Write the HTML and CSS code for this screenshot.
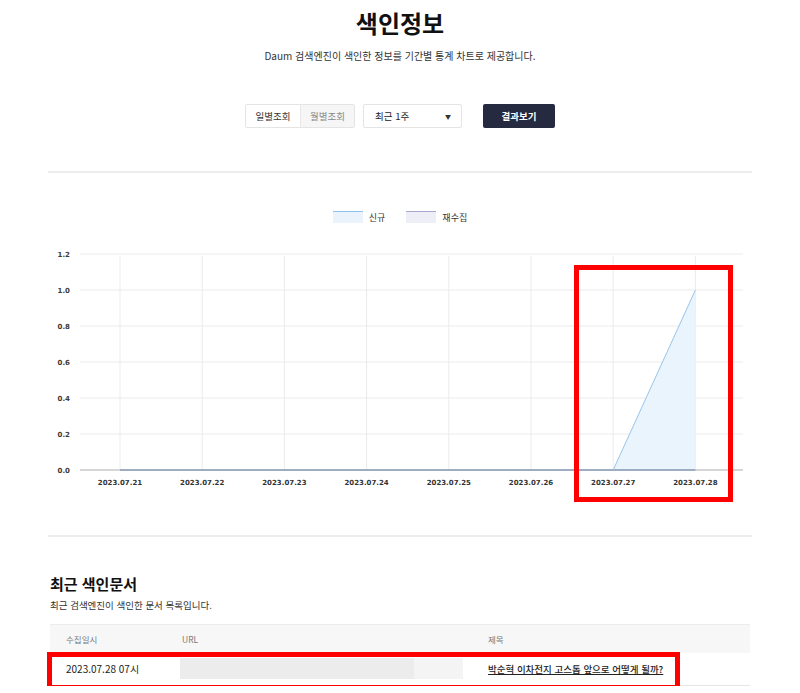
FILE: index.html
```html
<!DOCTYPE html>
<html lang="ko">
<head>
<meta charset="utf-8">
<title>색인정보</title>
<link rel="stylesheet" href="styles.css">
</head>
<body>
<div class="page">
  <header class="head">
    <h1 class="title">색인정보</h1>
    <p class="desc">Daum 검색엔진이 색인한 정보를 기간별 통계 차트로 제공합니다.</p>
  </header>

  <div class="controls">
    <div class="seg">
      <button class="seg-btn active">일별조회</button>
      <button class="seg-btn">월별조회</button>
    </div>
    <div class="select"><span>최근 1주</span><span class="caret">▼</span></div>
    <button class="go">결과보기</button>
  </div>

  <div class="rule"></div>

  <div class="legend">
    <div class="leg-item"><span class="sw sw-new"></span><span>신규</span></div>
    <div class="leg-item"><span class="sw sw-re"></span><span>재수집</span></div>
  </div>

  <svg class="chart" width="700" height="260" viewBox="0 0 700 260">
    <g class="hgrid">
      <line x1="30" y1="14" x2="693" y2="14"/>
      <line x1="30" y1="50" x2="693" y2="50"/>
      <line x1="30" y1="86" x2="693" y2="86"/>
      <line x1="30" y1="122" x2="693" y2="122"/>
      <line x1="30" y1="158" x2="693" y2="158"/>
      <line x1="30" y1="194" x2="693" y2="194"/>
    </g>
    <g class="vgrid">
      <line x1="70" y1="16" x2="70" y2="230"/>
      <line x1="152.2" y1="16" x2="152.2" y2="230"/>
      <line x1="234.4" y1="16" x2="234.4" y2="230"/>
      <line x1="316.6" y1="16" x2="316.6" y2="230"/>
      <line x1="398.8" y1="16" x2="398.8" y2="230"/>
      <line x1="481" y1="16" x2="481" y2="230"/>
      <line x1="563.2" y1="16" x2="563.2" y2="230"/>
      <line x1="645.4" y1="16" x2="645.4" y2="230"/>
    </g>
    <g class="ylab">
      <text x="20" y="17">1.2</text>
      <text x="20" y="53">1.0</text>
      <text x="20" y="89">0.8</text>
      <text x="20" y="125">0.6</text>
      <text x="20" y="161">0.4</text>
      <text x="20" y="197">0.2</text>
      <text x="20" y="233">0.0</text>
    </g>
    <polygon class="area" points="563.2,230 645.4,50 645.4,230"/>
    <line class="axis" x1="30" y1="230" x2="693" y2="230"/>
    <line class="zero" x1="70" y1="230" x2="645.4" y2="230"/>
    <line class="series" x1="563.2" y1="230" x2="645.4" y2="50"/>
    <g class="xlab">
      <text x="70" y="245">2023.07.21</text>
      <text x="152.2" y="245">2023.07.22</text>
      <text x="234.4" y="245">2023.07.23</text>
      <text x="316.6" y="245">2023.07.24</text>
      <text x="398.8" y="245">2023.07.25</text>
      <text x="481" y="245">2023.07.26</text>
      <text x="563.2" y="245">2023.07.27</text>
      <text x="645.4" y="245">2023.07.28</text>
    </g>
  </svg>

  <div class="rule rule2"></div>

  <section class="docs">
    <h2 class="docs-title">최근 색인문서</h2>
    <p class="docs-desc">최근 검색엔진이 색인한 문서 목록입니다.</p>
    <table class="tbl">
      <thead>
        <tr><th class="c-date">수집일시</th><th class="c-url">URL</th><th class="c-title">제목</th></tr>
      </thead>
      <tbody>
        <tr>
          <td class="c-date">2023.07.28 07시</td>
          <td class="c-url"><div class="mask"></div></td>
          <td class="c-title"><a href="#">박순혁 이차전지 고스톱 앞으로 어떻게 될까?</a></td>
        </tr>
      </tbody>
    </table>
  </section>

  <div class="mark mark-chart"></div>
  <div class="mark mark-row"></div>
</div>
</body>
</html>
```

FILE: styles.css
```css
* { box-sizing: border-box; }
html, body { margin: 0; padding: 0; background: #fff; }
body {
  font-family: "Noto Sans CJK KR", "Noto Sans", sans-serif;
  color: #222;
}
.page {
  position: relative;
  width: 700px;
  margin: 0 auto;
}
.head { text-align: center; padding-top: 8px; }
.title {
  margin: 0;
  font-size: 24px;
  line-height: 30px;
  font-weight: 700;
  color: #111;
}
.desc {
  margin: 10px 0 0;
  font-size: 10px;
  line-height: 16px;
  color: #333;
}
.controls {
  display: flex;
  justify-content: center;
  align-items: center;
  margin-top: 40px;
  height: 24px;
}
.seg {
  display: flex;
  border: 1px solid #e4e4e4;
  border-radius: 2px;
  height: 24px;
  overflow: hidden;
}
.seg-btn {
  width: 54px;
  height: 22px;
  border: 0;
  padding: 0;
  background: #fff;
  font-family: inherit;
  font-size: 9.5px;
  color: #333;
}
.seg-btn + .seg-btn {
  border-left: 1px solid #e8e8e8;
  background: #f6f6f6;
  color: #888;
}
.select {
  margin-left: 8px;
  width: 99px;
  height: 24px;
  border: 1px solid #e4e4e4;
  border-radius: 2px;
  display: flex;
  align-items: center;
  justify-content: space-between;
  padding: 0 10px 0 11px;
  font-size: 9.5px;
  color: #222;
}
.caret { font-size: 6px; color: #333; }
.go {
  margin-left: 21px;
  width: 72px;
  height: 24px;
  border: 0;
  border-radius: 2px;
  background: #262a40;
  color: #fff;
  font-family: inherit;
  font-size: 9.5px;
  font-weight: 700;
}
.rule {
  margin-top: 43px;
  height: 2px;
  background: #ececec;
  margin-left: -2px;
  margin-right: -2px;
}
.legend {
  display: flex;
  justify-content: center;
  gap: 21px;
  margin-top: 38px;
  height: 12px;
  font-size: 9px;
  color: #333;
}
.leg-item { display: flex; align-items: center; gap: 6px; }
.sw {
  display: inline-block;
  width: 30px;
  height: 12px;
}
.sw-new { background: #eaf3fc; border-top: 1px solid #8fc3ec; }
.sw-re { background: #eeeef6; border-top: 1px solid #a7a7cf; }
.chart { display: block; margin-top: 17px; overflow: visible; }
.hgrid line { stroke: #ebebeb; stroke-width: 1; }
.vgrid line { stroke: #ebebeb; stroke-width: 1; }
.ylab text {
  font-family: "DejaVu Sans", sans-serif;
  font-size: 7px;
  font-weight: 700;
  fill: #3a3a3a;
  text-anchor: end;
}
.xlab text {
  font-family: "DejaVu Sans", sans-serif;
  font-size: 7px;
  font-weight: 700;
  fill: #333;
  text-anchor: middle;
}
.axis { stroke: #d6d6d6; stroke-width: 2; }
.zero { stroke: #8d9fbb; stroke-width: 1.5; }
.area { fill: #eaf4fd; }
.series { stroke: #97c5ec; stroke-width: 1; }
.rule2 { margin-top: 35px; }
.docs-title {
  margin: 37px 0 0;
  font-size: 15px;
  line-height: 20px;
  font-weight: 700;
  color: #111;
}
.docs-desc {
  margin: 4px 0 0;
  font-size: 9.5px;
  line-height: 14px;
  color: #333;
}
.tbl {
  margin-top: 12px;
  width: 700px;
  border-collapse: collapse;
  table-layout: fixed;
}
.tbl th {
  height: 28px;
  background: #f7f7f7;
  border-top: 1px solid #ececec;
  font-size: 8.5px;
  font-weight: 400;
  color: #777;
  text-align: left;
  padding: 0;
}
.tbl td {
  height: 33px;
  border-bottom: 1px solid #e6e6e6;
  padding: 0;
  font-size: 10px;
  color: #222;
}
.tbl .c-date { width: 130px; padding-left: 16px; }
.tbl .c-url { width: 308px; }
.tbl th.c-url { padding-left: 2px; }
.mask {
  width: 283px;
  height: 21px;
  background: linear-gradient(to right, #ececec 0, #ececec 234px, #f4f4f4 234px);
}
.tbl a {
  color: #222;
  text-decoration: underline;
  font-size: 9.5px;
  font-weight: 500;
}
.mark {
  position: absolute;
  border: 5px solid #ff0000;
}
.mark-chart { left: 524px; top: 265px; width: 159px; height: 237px; }
.mark-row { left: -3px; top: 652px; width: 633px; height: 38px; }
```
